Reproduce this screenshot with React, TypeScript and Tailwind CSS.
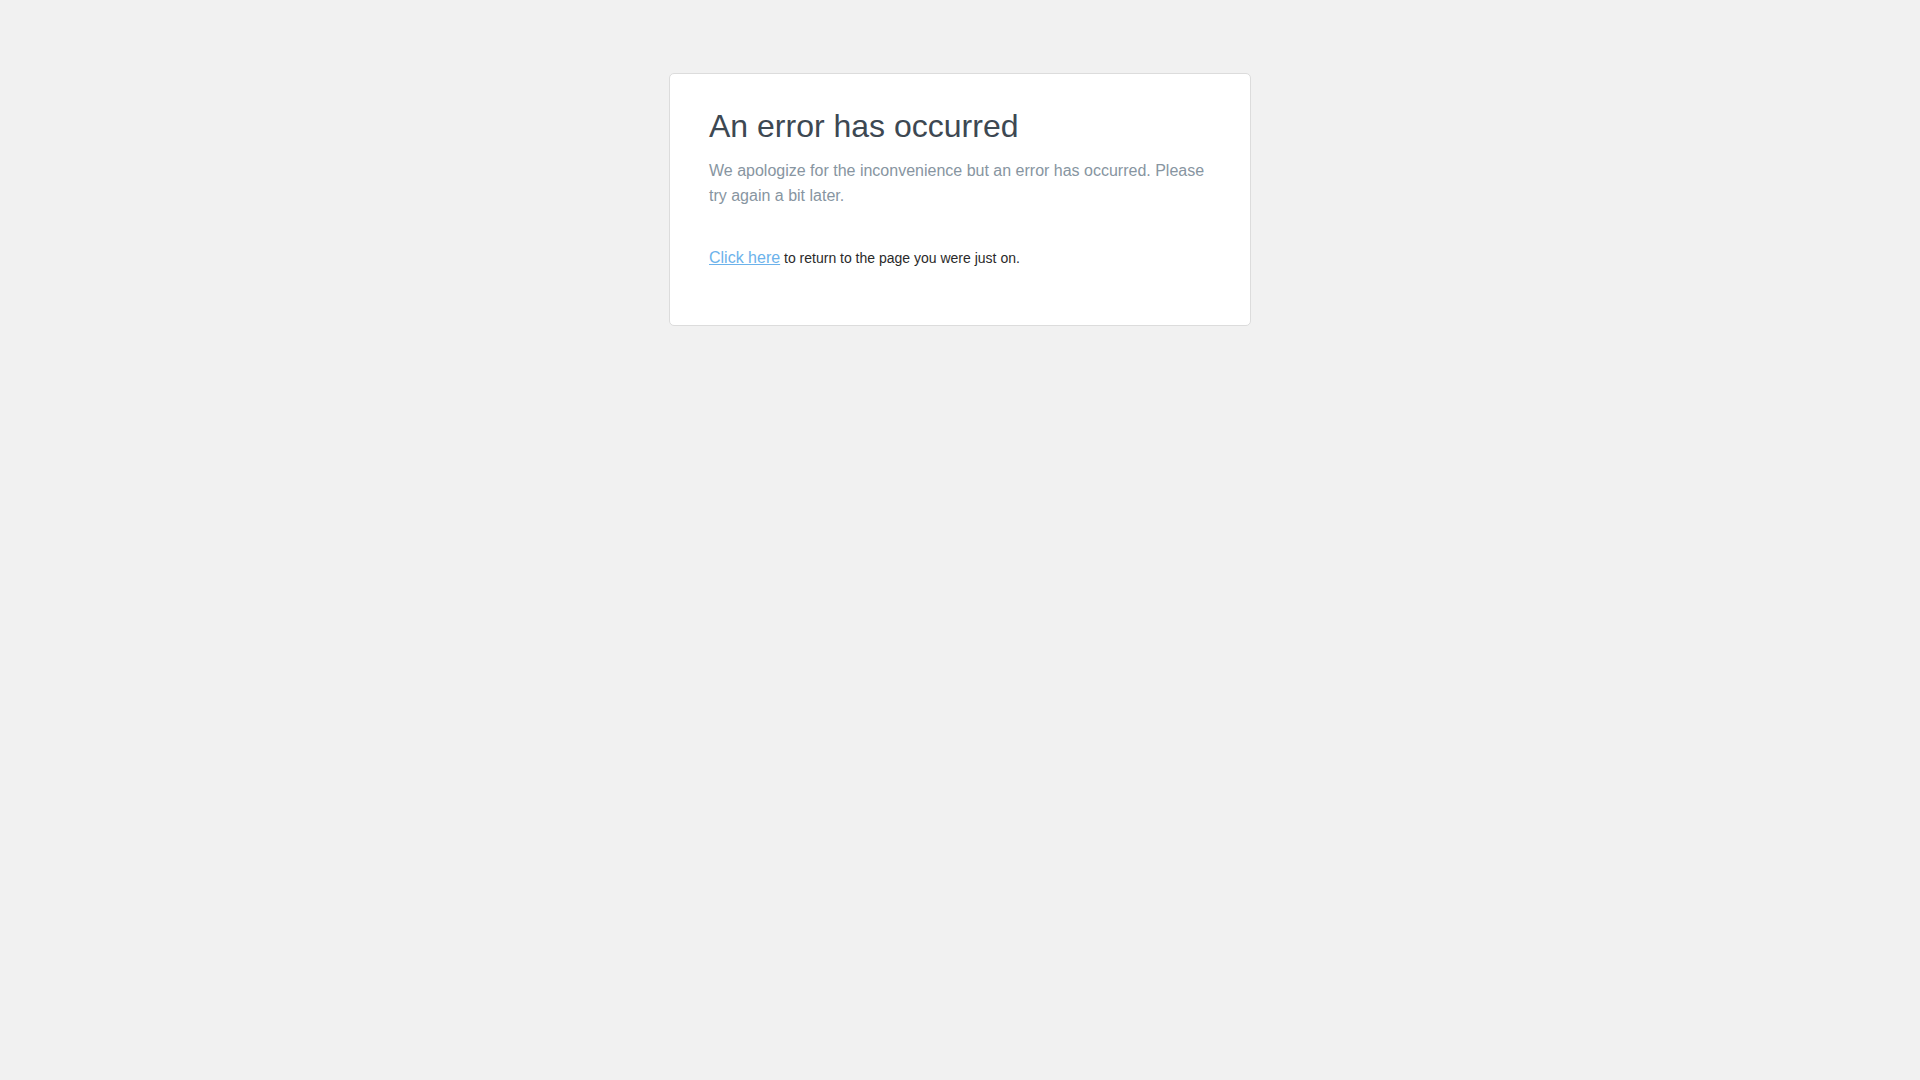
export default function App() {
  return (
    <div className="min-h-screen w-full bg-[#f1f1f1] pt-[73px] font-['Liberation_Sans',Arial,sans-serif]">
      <div className="mx-auto w-[582px] rounded-[5px] border border-[#dcdcdc] bg-white px-[39px] pt-8 pb-[55px]">
        <h1 className="text-[32px] leading-[40px] font-normal text-[#3d4852]">An error has occurred</h1>
        <p className="mt-[12px] text-[16px] leading-[25px] text-[#8795a1]">
          We apologize for the inconvenience but an error has occurred. Please try again a bit later.
        </p>
        <div className="mt-[38px] leading-[24px] text-[14px] text-[#2a2a2a]">
          <a href="#" className="text-[16px] text-[#6cb2eb] underline">
            Click here
          </a>{' '}
          to return to the page you were just on.
        </div>
      </div>
    </div>
  );
}
